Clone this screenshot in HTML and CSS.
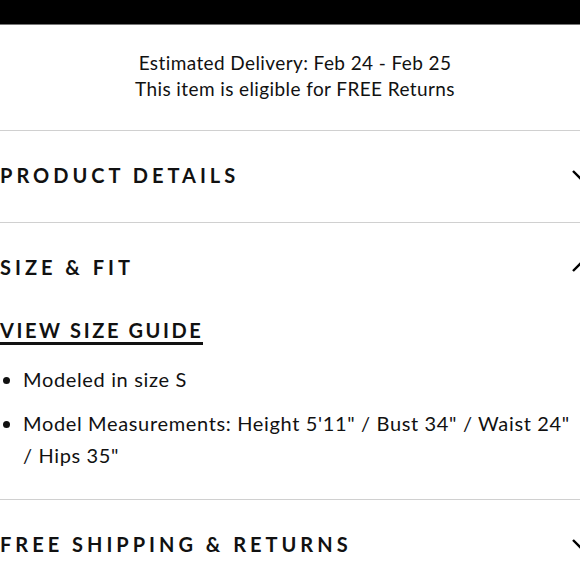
FILE: index.html
```html
<!DOCTYPE html>
<html>
<head>
<meta charset="utf-8">
<link rel="stylesheet" href="styles.css">
</head>
<body>
<div class="page">
  <div class="topbar"></div>
  <div class="delivery">
    <p>Estimated Delivery: Feb 24 - Feb 25</p>
    <p>This item is eligible for FREE Returns</p>
  </div>
  <div class="section">
    <div class="head">
      <span class="title">PRODUCT DETAILS</span>
      <svg class="chev" width="16" height="10" viewBox="0 0 16 10"><polyline points="1,1 8,8 15,1" fill="none" stroke="#000" stroke-width="2.4"/></svg>
    </div>
  </div>
  <div class="section open">
    <div class="head">
      <span class="title">SIZE &amp; FIT</span>
      <svg class="chev" width="16" height="10" viewBox="0 0 16 10"><polyline points="1,9 8,2 15,9" fill="none" stroke="#000" stroke-width="2.4"/></svg>
    </div>
    <div class="body">
      <a class="guide">VIEW SIZE GUIDE</a>
      <ul class="list">
        <li>Modeled in size S</li>
        <li>Model Measurements: Height 5'11" / Bust 34" / Waist 24" / Hips 35"</li>
      </ul>
    </div>
  </div>
  <div class="section">
    <div class="head">
      <span class="title">FREE SHIPPING &amp; RETURNS</span>
      <svg class="chev" width="16" height="10" viewBox="0 0 16 10"><polyline points="1,1 8,8 15,1" fill="none" stroke="#000" stroke-width="2.4"/></svg>
    </div>
  </div>
</div>
</body>
</html>
```
FILE: styles.css
```css
html, body {
  margin: 0;
  padding: 0;
  background: #fff;
  overflow: hidden;
}
.page {
  width: 590px;
  font-family: "Lato", "Liberation Sans", sans-serif;
  color: #111;
}
.topbar {
  height: 24px;
  background: #000;
  border-bottom: 1px solid #777;
}
.delivery {
  padding: 25px 0 28px;
  text-align: center;
  font-size: 19px;
  line-height: 26px;
  letter-spacing: 0.4px;
}
.delivery p {
  margin: 0;
}
.section {
  border-top: 1px solid #d0d0d0;
}
.head {
  height: 91px;
  display: flex;
  align-items: center;
  justify-content: space-between;
}
.title {
  font-family: "Lato", sans-serif;
  font-weight: 700;
  font-size: 20px;
  letter-spacing: 4px;
  color: #111;
  margin-top: -4px;
}
.chev {
  margin-right: 2px;
  margin-top: -4px;
}
.body {
  padding: 4px 0 27px;
}
.guide {
  display: inline-block;
  font-weight: 700;
  font-size: 20px;
  line-height: 24px;
  letter-spacing: 2.6px;
  border-bottom: 3px solid #111;
}
.list {
  margin: 18px 0 0;
  padding: 0 12px 0 23px;
  font-size: 20px;
  line-height: 32px;
  letter-spacing: 0.65px;
}
.list li + li {
  margin-top: 12px;
}
.body {
  padding-bottom: 28px;
}
```
